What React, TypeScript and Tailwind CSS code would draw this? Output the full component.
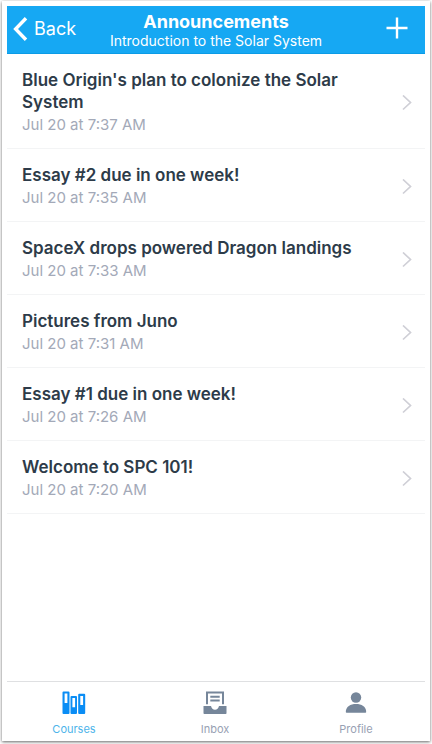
import { useState } from "react";

const announcements = [
  { title: "Blue Origin's plan to colonize the Solar System", date: "Jul 20 at 7:37 AM" },
  { title: "Essay #2 due in one week!", date: "Jul 20 at 7:35 AM" },
  { title: "SpaceX drops powered Dragon landings", date: "Jul 20 at 7:33 AM" },
  { title: "Pictures from Juno", date: "Jul 20 at 7:31 AM" },
  { title: "Essay #1 due in one week!", date: "Jul 20 at 7:26 AM" },
  { title: "Welcome to SPC 101!", date: "Jul 20 at 7:20 AM" },
];

const CoursesIcon = () => (
  <svg viewBox="0 0 24 24" className="size-6" fill="currentColor" fillRule="evenodd" aria-hidden="true">
    <path d="M1.500 .5h5q1 0 1 1V22q0 1-1 1h-5q-1 0-1-1V1.500q0-1 1-1zM2.600 2.500v9.500h2.800V2.500z" />
    <path d="M9.500 5h4.500q1 0 1 1v16q0 1-1 1H9.500q-1 0-1-1V6q0-1 1-1zM10.400 7v9.200h2.700V7z" />
    <path d="M17.200 2.800h5q1 0 1 1V22q0 1-1 1h-5q-1 0-1-1V3.800q0-1 1-1zM18.300 5v9h2.800V5z" />
  </svg>
);

const InboxIcon = () => (
  <svg viewBox="0 0 24 24" className="size-6" fill="currentColor" aria-hidden="true">
    <path d="M3 .5h18v12.800h-2V2.500H5v10.800H3z" />
    <path d="M7.300 4.800h9.400v2H7.300zM7.300 8.600h9.400v2H7.300z" />
    <path d="M.5 15H8c.5 2.400 2 3.800 4 3.800s3.500-1.400 4-3.800h7.500v7.200q0 .8-.8.8H1.300q-.8 0-.8-.8z" />
  </svg>
);

const ProfileIcon = () => (
  <svg viewBox="0 0 24 24" className="size-6" fill="currentColor" aria-hidden="true">
    <circle cx="12" cy="6.500" r="5.200" />
    <path d="M1.800 21C1.800 15.500 6.500 13 12 13s10.200 2.500 10.200 8q0 .8-.8.8H2.600q-.8 0-.8-.8z" />
  </svg>
);

const tabs = [
  { name: "Courses", icon: CoursesIcon },
  { name: "Inbox", icon: InboxIcon },
  { name: "Profile", icon: ProfileIcon },
];

const Header = () => (
  <header className="grid grid-cols-[1fr_auto_1fr] items-center h-12 bg-[#16a8f3] border-b border-[#0b9be6] text-white">
    <button type="button" className="flex items-center gap-1.5 pl-1.5 pb-0.5 justify-self-start text-lg leading-6">
      <svg viewBox="0 0 15 24" className="w-[15px] h-6" fill="none" stroke="currentColor" strokeWidth="3.400" aria-hidden="true">
        <path d="M13 1.200 2.600 12 13 22.800" />
      </svg>
      Back
    </button>
    <div className="pt-0.5 text-center">
      <h1 className="text-lg leading-5 font-bold">Announcements</h1>
      <p className="text-sm leading-[18px]">Introduction to the Solar System</p>
    </div>
    <button type="button" aria-label="Add announcement" className="justify-self-end pr-4 pb-1">
      <svg viewBox="0 0 24 24" className="size-6" fill="none" stroke="currentColor" strokeWidth="2.400" aria-hidden="true">
        <path d="M12 1.500v21M1.500 12h21" />
      </svg>
    </button>
  </header>
);

const AnnouncementList = () => (
  <ul>
    {announcements.map(({ title, date }) => (
      <li key={title} className="border-b border-[#f3f4f5]">
        <a href="#" className="flex items-center justify-between gap-4 pt-[15px] pb-3 pl-[15px] pr-[13px]">
          <div className="flex flex-col gap-px">
            <h2 className="text-[17px] leading-[22px] font-semibold text-[#2d3b49]">{title}</h2>
            <p className="text-[15px] leading-[22px] text-[#a3a9b8]">{date}</p>
          </div>
          <svg viewBox="0 0 10 16" className="w-2.5 h-4 shrink-0" fill="none" stroke="#cfcfd6" strokeWidth="1.700" aria-hidden="true">
            <path d="m1 .5 7.500 7L1 14.500" />
          </svg>
        </a>
      </li>
    ))}
  </ul>
);

const TabBar = () => {
  const [active, setActive] = useState("Courses");

  return (
    <nav className="flex justify-between pl-[19px] pr-[21px] border-t border-[#dfe0e2]">
      {tabs.map(({ name, icon: Icon }) => (
        <button
          key={name}
          type="button"
          onClick={() => setActive(name)}
          className="flex flex-col items-center gap-1.5 w-24 pt-[9px] pb-px"
        >
          <span className={active === name ? "text-[#0a8df5]" : "text-[#76869a]"}>
            <Icon />
          </span>
          <span className={`text-[11px] leading-4 ${active === name ? "text-[#4db4ea]" : "text-[#98a1b3]"}`}>
            {name}
          </span>
        </button>
      ))}
    </nav>
  );
};

export default function App() {
  return (
    <div className="flex flex-col min-h-screen pt-px px-0.5 pb-[3px] bg-white font-['Inter','Liberation_Sans',sans-serif]">
      <div className="flex flex-col flex-1 px-[5px] pt-[5px] pb-[3px] bg-white shadow-[0_1px_3px_#666]">
        <Header />
        <main className="flex-1">
          <AnnouncementList />
        </main>
        <TabBar />
      </div>
    </div>
  );
}
